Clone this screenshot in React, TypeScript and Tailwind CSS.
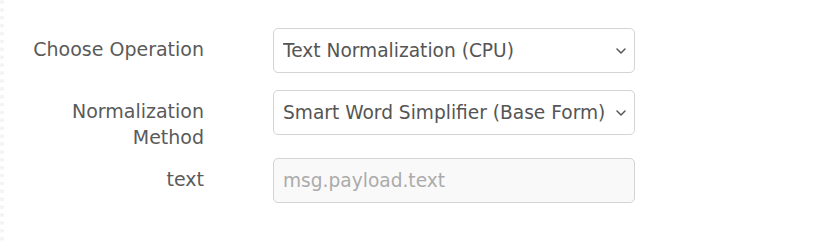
import React from 'react';

const font = { fontFamily: '"DejaVu Sans", sans-serif' };

function Chevron() {
  return (
    <svg width="10" height="6" viewBox="0 0 10 6" fill="none" className="ml-[4px] shrink-0">
      <path d="M1 1l4 4 4-4" stroke="#555" strokeWidth="1.5" strokeLinecap="round" strokeLinejoin="round" />
    </svg>
  );
}

function FakeSelect({ value }: { value: string }) {
  return (
    <div className="ml-[69px] flex h-[45px] w-[362px] items-center rounded-[5px] border border-[#d4d4d4] bg-white pl-[9px] pr-[8px]">
      <span className="min-w-0 flex-1 overflow-hidden whitespace-nowrap text-[18.6px] text-[#555]">{value}</span>
      <Chevron />
    </div>
  );
}

export default function App() {
  return (
    <div className="h-[241px] w-[818px] overflow-hidden border-l-4 border-dotted border-[#f3f3f3] bg-white" style={font}>
      <div className="pl-[20px] pt-[28px]">
        {/* Operation */}
        <div className="flex items-start">
          <label className="w-[180px] pt-[8px] text-right text-[19px] leading-[26px] text-[#5a5a5a]">Choose Operation</label>
          <FakeSelect value="Text Normalization (CPU)" />
        </div>

        {/* Method */}
        <div className="mt-[17px] flex items-start">
          <label className="w-[180px] pt-[8px] text-right text-[19px] leading-[26px] text-[#5a5a5a]">Normalization Method</label>
          <FakeSelect value="Smart Word Simplifier (Base Form)" />
        </div>

        {/* Text input */}
        <div className="mt-[8px] flex items-start">
          <label className="w-[180px] pt-[8px] text-right text-[19px] leading-[26px] text-[#5a5a5a]">text</label>
          <input
            placeholder="msg.payload.text"
            className="ml-[69px] h-[45px] w-[362px] rounded-[5px] border border-[#d4d4d4] bg-[#f9f9f9] px-[9px] text-[18.6px] text-[#555] outline-none placeholder:text-[#ababab]"
            style={font}
          />
        </div>
      </div>
    </div>
  );
}
